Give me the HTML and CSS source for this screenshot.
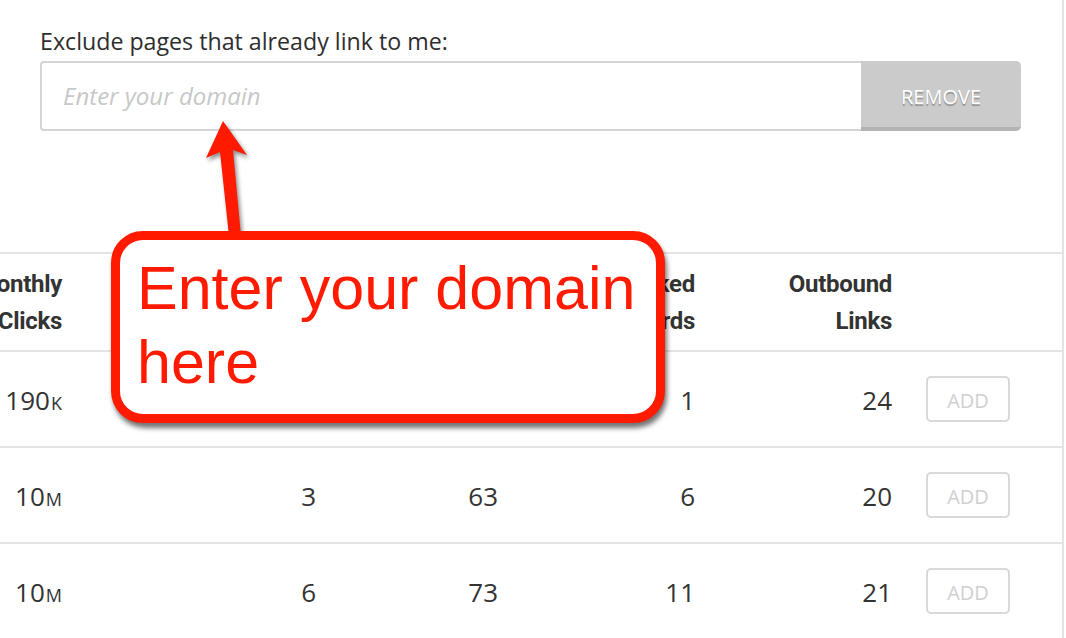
FILE: index.html
```html
<!DOCTYPE html>
<html lang="en">
<head>
<meta charset="utf-8">
<title>Exclude pages</title>
<link rel="stylesheet" href="styles.css">
</head>
<body>
<div class="page">
  <section class="filter">
    <label class="filter-label" for="domain">Exclude pages that already link to me:</label>
    <div class="filter-row">
      <input id="domain" class="filter-input" type="text" placeholder="Enter your domain">
      <button class="btn-remove">REMOVE</button>
    </div>
  </section>

  <section class="table">
    <div class="row head">
      <div class="cell"><span>Monthly</span><span>Clicks</span></div>
      <div class="cell"><span>Domain</span><span>Rating</span></div>
      <div class="cell"><span>Referring</span><span>Domains</span></div>
      <div class="cell"><span>Ranked</span><span>Keywords</span></div>
      <div class="cell"><span>Outbound</span><span>Links</span></div>
      <div class="cell action"></div>
    </div>
    <div class="row">
      <div class="cell"><span class="val">190<span class="unit">k</span></span></div>
      <div class="cell"><span class="val">2</span></div>
      <div class="cell"><span class="val">48</span></div>
      <div class="cell"><span class="val">1</span></div>
      <div class="cell"><span class="val">24</span></div>
      <div class="cell action"><button class="btn-add">ADD</button></div>
    </div>
    <div class="row">
      <div class="cell"><span class="val">10<span class="unit">M</span></span></div>
      <div class="cell"><span class="val">3</span></div>
      <div class="cell"><span class="val">63</span></div>
      <div class="cell"><span class="val">6</span></div>
      <div class="cell"><span class="val">20</span></div>
      <div class="cell action"><button class="btn-add">ADD</button></div>
    </div>
    <div class="row">
      <div class="cell"><span class="val">10<span class="unit">M</span></span></div>
      <div class="cell"><span class="val">6</span></div>
      <div class="cell"><span class="val">73</span></div>
      <div class="cell"><span class="val">11</span></div>
      <div class="cell"><span class="val">21</span></div>
      <div class="cell action"><button class="btn-add">ADD</button></div>
    </div>
  </section>

  <svg class="arrow" width="80" height="140" viewBox="180 110 80 140" aria-hidden="true">
    <polygon points="223,121 247,155 233,150 241,236 229,236 220,152 206,158" fill="#ff1a00"/>
  </svg>

  <div class="callout">Enter your domain<br>here</div>
</div>
</body>
</html>
```

FILE: styles.css
```css
* { box-sizing: border-box; }

html, body {
  margin: 0;
  padding: 0;
  background: #ffffff;
}

.page {
  position: relative;
  width: 1064px;
  height: 638px;
  overflow: hidden;
  border-right: 2px solid #e4e4e4;
  font-family: "Open Sans", "Liberation Sans", sans-serif;
  color: #333333;
}

/* ---------- filter ---------- */
.filter {
  padding: 25px 0 0 40px;
  width: 1021px;
}

.filter-label {
  display: block;
  font-size: 23.2px;
  line-height: 32px;
  color: #2e2e2e;
  margin-bottom: 4px;
}

.filter-row {
  display: flex;
  height: 70px;
}

.filter-input {
  flex: 1;
  height: 70px;
  border: 2px solid #d4d4d4;
  border-right: none;
  border-radius: 4px 0 0 4px;
  padding: 0 0 2px 21px;
  font-family: "Open Sans", sans-serif;
  font-size: 24px;
  color: #333333;
  outline: none;
  background: #ffffff;
}

.filter-input::placeholder {
  color: #c8c8c8;
  font-style: italic;
}

.btn-remove {
  width: 160px;
  height: 70px;
  border: none;
  border-bottom: 4px solid #b3b3b3;
  border-radius: 0 5px 5px 0;
  background: #cbcbcb;
  color: #ffffff;
  font-family: "Open Sans", sans-serif;
  font-size: 20px;
  padding: 4px 0 0 0;
  text-shadow: 0 2px 1px rgba(0, 0, 0, 0.28);
}

/* ---------- table ---------- */
.table {
  margin-top: 121px;
  border-top: 2px solid #e4e4e4;
}

.row {
  display: grid;
  grid-template-columns: 62px 254px 182px 197px 197px 1fr;
  height: 96px;
  border-bottom: 2px solid #e4e4e4;
}

.row.head {
  height: 98px;
}

.cell {
  display: flex;
  align-items: center;
  justify-content: flex-end;
  white-space: nowrap;
  font-size: 26px;
  color: #333333;
  padding-top: 2px;
}

.row.head .cell {
  flex-direction: column;
  align-items: flex-end;
  justify-content: center;
  font-family: Roboto, "Liberation Sans", sans-serif;
  font-weight: 700;
  font-size: 24px;
  line-height: 37px;
  letter-spacing: -0.3px;
  color: #333333;
  padding-top: 2px;
}

.unit {
  font-size: 18px;
  text-transform: uppercase;
  margin-left: 1px;
}

.cell.action {
  justify-content: flex-start;
  padding-left: 34px;
  padding-top: 0;
}

.btn-add {
  width: 84px;
  height: 46px;
  border: 2px solid #d9d9d9;
  border-radius: 5px;
  background: #ffffff;
  color: #cfcfcf;
  font-family: "Open Sans", sans-serif;
  font-size: 20px;
  padding: 2px 0 0 0;
}

/* ---------- annotation overlay ---------- */
.arrow {
  position: absolute;
  left: 180px;
  top: 110px;
  filter: drop-shadow(2px 3px 2px rgba(0, 0, 0, 0.45));
}

.callout {
  position: absolute;
  left: 111px;
  top: 231px;
  width: 554px;
  height: 192px;
  border: 9px solid #ff1a00;
  border-radius: 32px;
  background: #ffffff;
  box-shadow: 2px 5px 5px rgba(0, 0, 0, 0.55);
  color: #ff1a00;
  font-family: "Liberation Sans", Arial, sans-serif;
  font-size: 61px;
  line-height: 74px;
  padding: 11px 0 0 17px;
  white-space: nowrap;
}
```
